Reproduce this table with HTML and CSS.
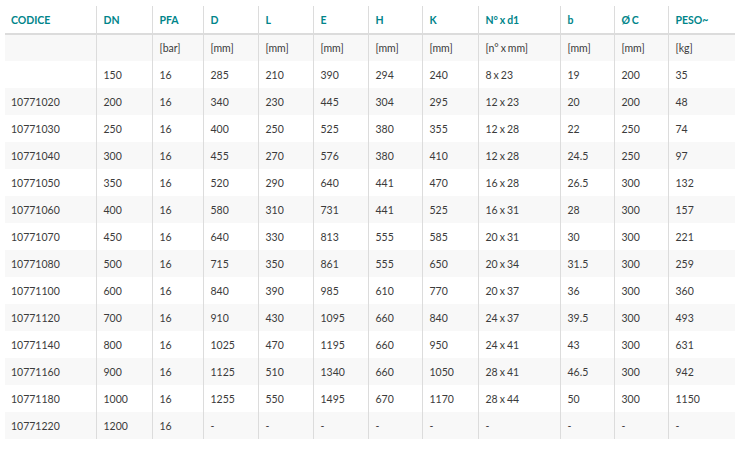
FILE: index.html
```html
<!DOCTYPE html>
<html>
<head>
<meta charset="utf-8">
<link rel="stylesheet" href="styles.css">
</head>
<body>
<table class="spec">
<colgroup>
<col style="width:91px"><col style="width:56px"><col style="width:51px"><col style="width:55px"><col style="width:55px"><col style="width:55px"><col style="width:54px"><col style="width:56px"><col style="width:82px"><col style="width:54px"><col style="width:54px"><col style="width:67px">
</colgroup>
<thead>
<tr><th>CODICE</th><th>DN</th><th>PFA</th><th>D</th><th>L</th><th>E</th><th>H</th><th>K</th><th>N° x d1</th><th>b</th><th>Ø C</th><th>PESO~</th></tr>
</thead>
<tbody>
<tr><td></td><td></td><td>[bar]</td><td>[mm]</td><td>[mm]</td><td>[mm]</td><td>[mm]</td><td>[mm]</td><td>[n° x mm]</td><td>[mm]</td><td>[mm]</td><td>[kg]</td></tr>
<tr><td></td><td>150</td><td>16</td><td>285</td><td>210</td><td>390</td><td>294</td><td>240</td><td>8 x 23</td><td>19</td><td>200</td><td>35</td></tr>
<tr><td>10771020</td><td>200</td><td>16</td><td>340</td><td>230</td><td>445</td><td>304</td><td>295</td><td>12 x 23</td><td>20</td><td>200</td><td>48</td></tr>
<tr><td>10771030</td><td>250</td><td>16</td><td>400</td><td>250</td><td>525</td><td>380</td><td>355</td><td>12 x 28</td><td>22</td><td>250</td><td>74</td></tr>
<tr><td>10771040</td><td>300</td><td>16</td><td>455</td><td>270</td><td>576</td><td>380</td><td>410</td><td>12 x 28</td><td>24.5</td><td>250</td><td>97</td></tr>
<tr><td>10771050</td><td>350</td><td>16</td><td>520</td><td>290</td><td>640</td><td>441</td><td>470</td><td>16 x 28</td><td>26.5</td><td>300</td><td>132</td></tr>
<tr><td>10771060</td><td>400</td><td>16</td><td>580</td><td>310</td><td>731</td><td>441</td><td>525</td><td>16 x 31</td><td>28</td><td>300</td><td>157</td></tr>
<tr><td>10771070</td><td>450</td><td>16</td><td>640</td><td>330</td><td>813</td><td>555</td><td>585</td><td>20 x 31</td><td>30</td><td>300</td><td>221</td></tr>
<tr><td>10771080</td><td>500</td><td>16</td><td>715</td><td>350</td><td>861</td><td>555</td><td>650</td><td>20 x 34</td><td>31.5</td><td>300</td><td>259</td></tr>
<tr><td>10771100</td><td>600</td><td>16</td><td>840</td><td>390</td><td>985</td><td>610</td><td>770</td><td>20 x 37</td><td>36</td><td>300</td><td>360</td></tr>
<tr><td>10771120</td><td>700</td><td>16</td><td>910</td><td>430</td><td>1095</td><td>660</td><td>840</td><td>24 x 37</td><td>39.5</td><td>300</td><td>493</td></tr>
<tr><td>10771140</td><td>800</td><td>16</td><td>1025</td><td>470</td><td>1195</td><td>660</td><td>950</td><td>24 x 41</td><td>43</td><td>300</td><td>631</td></tr>
<tr><td>10771160</td><td>900</td><td>16</td><td>1125</td><td>510</td><td>1340</td><td>660</td><td>1050</td><td>28 x 41</td><td>46.5</td><td>300</td><td>942</td></tr>
<tr><td>10771180</td><td>1000</td><td>16</td><td>1255</td><td>550</td><td>1495</td><td>670</td><td>1170</td><td>28 x 44</td><td>50</td><td>300</td><td>1150</td></tr>
<tr><td>10771220</td><td>1200</td><td>16</td><td>-</td><td>-</td><td>-</td><td>-</td><td>-</td><td>-</td><td>-</td><td>-</td><td>-</td></tr>
</tbody>
</table>
</body>
</html>
```
FILE: styles.css
```css
html, body {
  margin: 0;
  padding: 0;
  background: #fff;
}
body {
  padding: 6px 4px 0 5px;
  font-family: Lato, "Open Sans", sans-serif;
}
.spec {
  width: 730px;
  table-layout: fixed;
  border-collapse: collapse;
  font-size: 10.5px;
  color: #3b3b3b;
  word-spacing: -0.7px;
}
.spec th, .spec td {
  padding: 0 6px 0 7px;
  text-align: left;
  vertical-align: middle;
  white-space: nowrap;
  border-left: 1px solid #dcdcdc;
}
.spec td {
  height: 27px;
  box-sizing: border-box;
}
.spec th:first-child, .spec td:first-child {
  border-left: none;
  padding-left: 6px;
}
.spec th {
  height: 27px;
  box-sizing: content-box;
  font-weight: 700;
  color: #00858a;
  border-bottom: 2px solid #dcdcdc;
}
.spec tbody tr:nth-child(odd) td {
  background: #f8f8f8;
}
```
